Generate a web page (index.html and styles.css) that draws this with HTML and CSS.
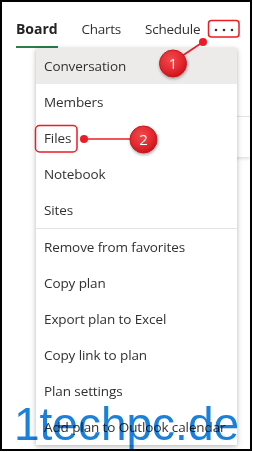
FILE: index.html
```html
<!DOCTYPE html>
<html>
<head>
<meta charset="utf-8">
<link rel="stylesheet" href="styles.css">
</head>
<body>
<div class="frame">
  <nav class="tabs">
    <span class="tab tab-active">Board</span>
    <span class="tab">Charts</span>
    <span class="tab">Schedule</span>
    <span class="more">
      <svg width="24" height="6" viewBox="0 0 24 6"><circle cx="4" cy="3" r="1.3" fill="#323130"/><circle cx="12" cy="3" r="1.3" fill="#323130"/><circle cx="20" cy="3" r="1.3" fill="#323130"/></svg>
    </span>
  </nav>
  <div class="bucket"></div>

  <ul class="menu">
    <li class="item item-hover">Conversation</li>
    <li class="item">Members</li>
    <li class="item">Files</li>
    <li class="item">Notebook</li>
    <li class="item">Sites</li>
    <li class="divider"></li>
    <li class="item">Remove from favorites</li>
    <li class="item">Copy plan</li>
    <li class="item">Export plan to Excel</li>
    <li class="item">Copy link to plan</li>
    <li class="item">Plan settings</li>
    <li class="item">Add plan to Outlook calendar</li>
  </ul>

  <div class="watermark">1techpc.de</div>
</div>

<svg class="annot" width="253" height="452" viewBox="0 0 253 452">
  <defs>
    <radialGradient id="bg" cx="0.42" cy="0.35" r="0.65">
      <stop offset="0" stop-color="#f24a4e"/>
      <stop offset="0.7" stop-color="#e0262c"/>
      <stop offset="1" stop-color="#c8161c"/>
    </radialGradient>
    <filter id="sh" x="-40%" y="-40%" width="180%" height="180%">
      <feDropShadow dx="0.5" dy="1.5" stdDeviation="1.5" flood-color="#000" flood-opacity="0.35"/>
    </filter>
  </defs>
  <rect x="208.5" y="20.5" width="30.5" height="16.5" rx="3" fill="none" stroke="#ec1c24" stroke-width="1.5"/>
  <line x1="203" y1="42" x2="182" y2="56" stroke="#ec1c24" stroke-width="1.6"/>
  <circle cx="203" cy="42" r="4" fill="#ec1c24"/>
  <circle cx="173" cy="63.5" r="13.5" fill="url(#bg)" stroke="#c41a1f" stroke-width="1" filter="url(#sh)"/>
  <text x="173" y="68.5" class="num">1</text>

  <rect x="35.5" y="125.5" width="41.5" height="26.5" rx="4" fill="none" stroke="#ec1c24" stroke-width="1.5"/>
  <line x1="84" y1="139" x2="131" y2="139" stroke="#ec1c24" stroke-width="1.6"/>
  <circle cx="84" cy="139" r="4" fill="#ec1c24"/>
  <circle cx="143.5" cy="139.5" r="13.5" fill="url(#bg)" stroke="#c41a1f" stroke-width="1" filter="url(#sh)"/>
  <text x="143.5" y="144.5" class="num">2</text>
</svg>
</body>
</html>
```

FILE: styles.css
```css
html, body {
  margin: 0;
  padding: 0;
  background: #ffffff;
}

body {
  position: relative;
  width: 253px;
  height: 452px;
  overflow: hidden;
  font-family: "Open Sans", "Noto Sans", sans-serif;
}

.frame {
  position: relative;
  box-sizing: border-box;
  width: 252px;
  height: 451px;
  border: 2px solid #000;
  background: #fff;
  overflow: hidden;
}

.tabs {
  display: flex;
  align-items: flex-start;
  height: 46px;
  padding-left: 14px;
  box-sizing: border-box;
}

.tab {
  display: block;
  font-size: 13.5px;
  color: #323130;
  line-height: 18px;
  padding-top: 18px;
  height: 26px;
  margin-right: 24px;
  white-space: nowrap;
  letter-spacing: -0.25px;
}

.tab-active {
  font-size: 14px;
  font-weight: 700;
  color: #252423;
  letter-spacing: -0.05px;
  border-bottom: 2px solid #2e7d4f;
}

.more {
  display: block;
  margin-left: -12px;
  padding-top: 25px;
}

.more svg {
  display: block;
}

.bucket {
  margin: 68px 0 0 60px;
  height: 40px;
  border-top: 1px solid #e6e4e2;
  box-shadow: 0 2px 3px rgba(0, 0, 0, 0.12);
}

.menu {
  position: absolute;
  left: 34px;
  top: 46px;
  width: 201px;
  margin: 0;
  padding: 0;
  list-style: none;
  background: #fff;
  box-shadow: 0 1px 4px rgba(0, 0, 0, 0.22), 0 3px 8px rgba(0, 0, 0, 0.10);
}

.item {
  height: 36px;
  line-height: 36px;
  padding-left: 8px;
  font-size: 13.5px;
  color: #323130;
  white-space: nowrap;
  letter-spacing: -0.1px;
}

.item-hover {
  background: #edebe9;
}

.divider {
  height: 1px;
  background: #e6e4e2;
}

.watermark {
  position: absolute;
  left: 12px;
  top: 399px;
  font-family: "Liberation Sans", Arial, sans-serif;
  font-size: 46px;
  line-height: 1;
  color: #1b80da;
  letter-spacing: 0;
  mix-blend-mode: multiply;
  white-space: nowrap;
}

.annot {
  position: absolute;
  left: 0;
  top: 0;
}

.num {
  font-family: "Open Sans", "Noto Sans", sans-serif;
  font-size: 15px;
  fill: #fff;
  text-anchor: middle;
}
```
